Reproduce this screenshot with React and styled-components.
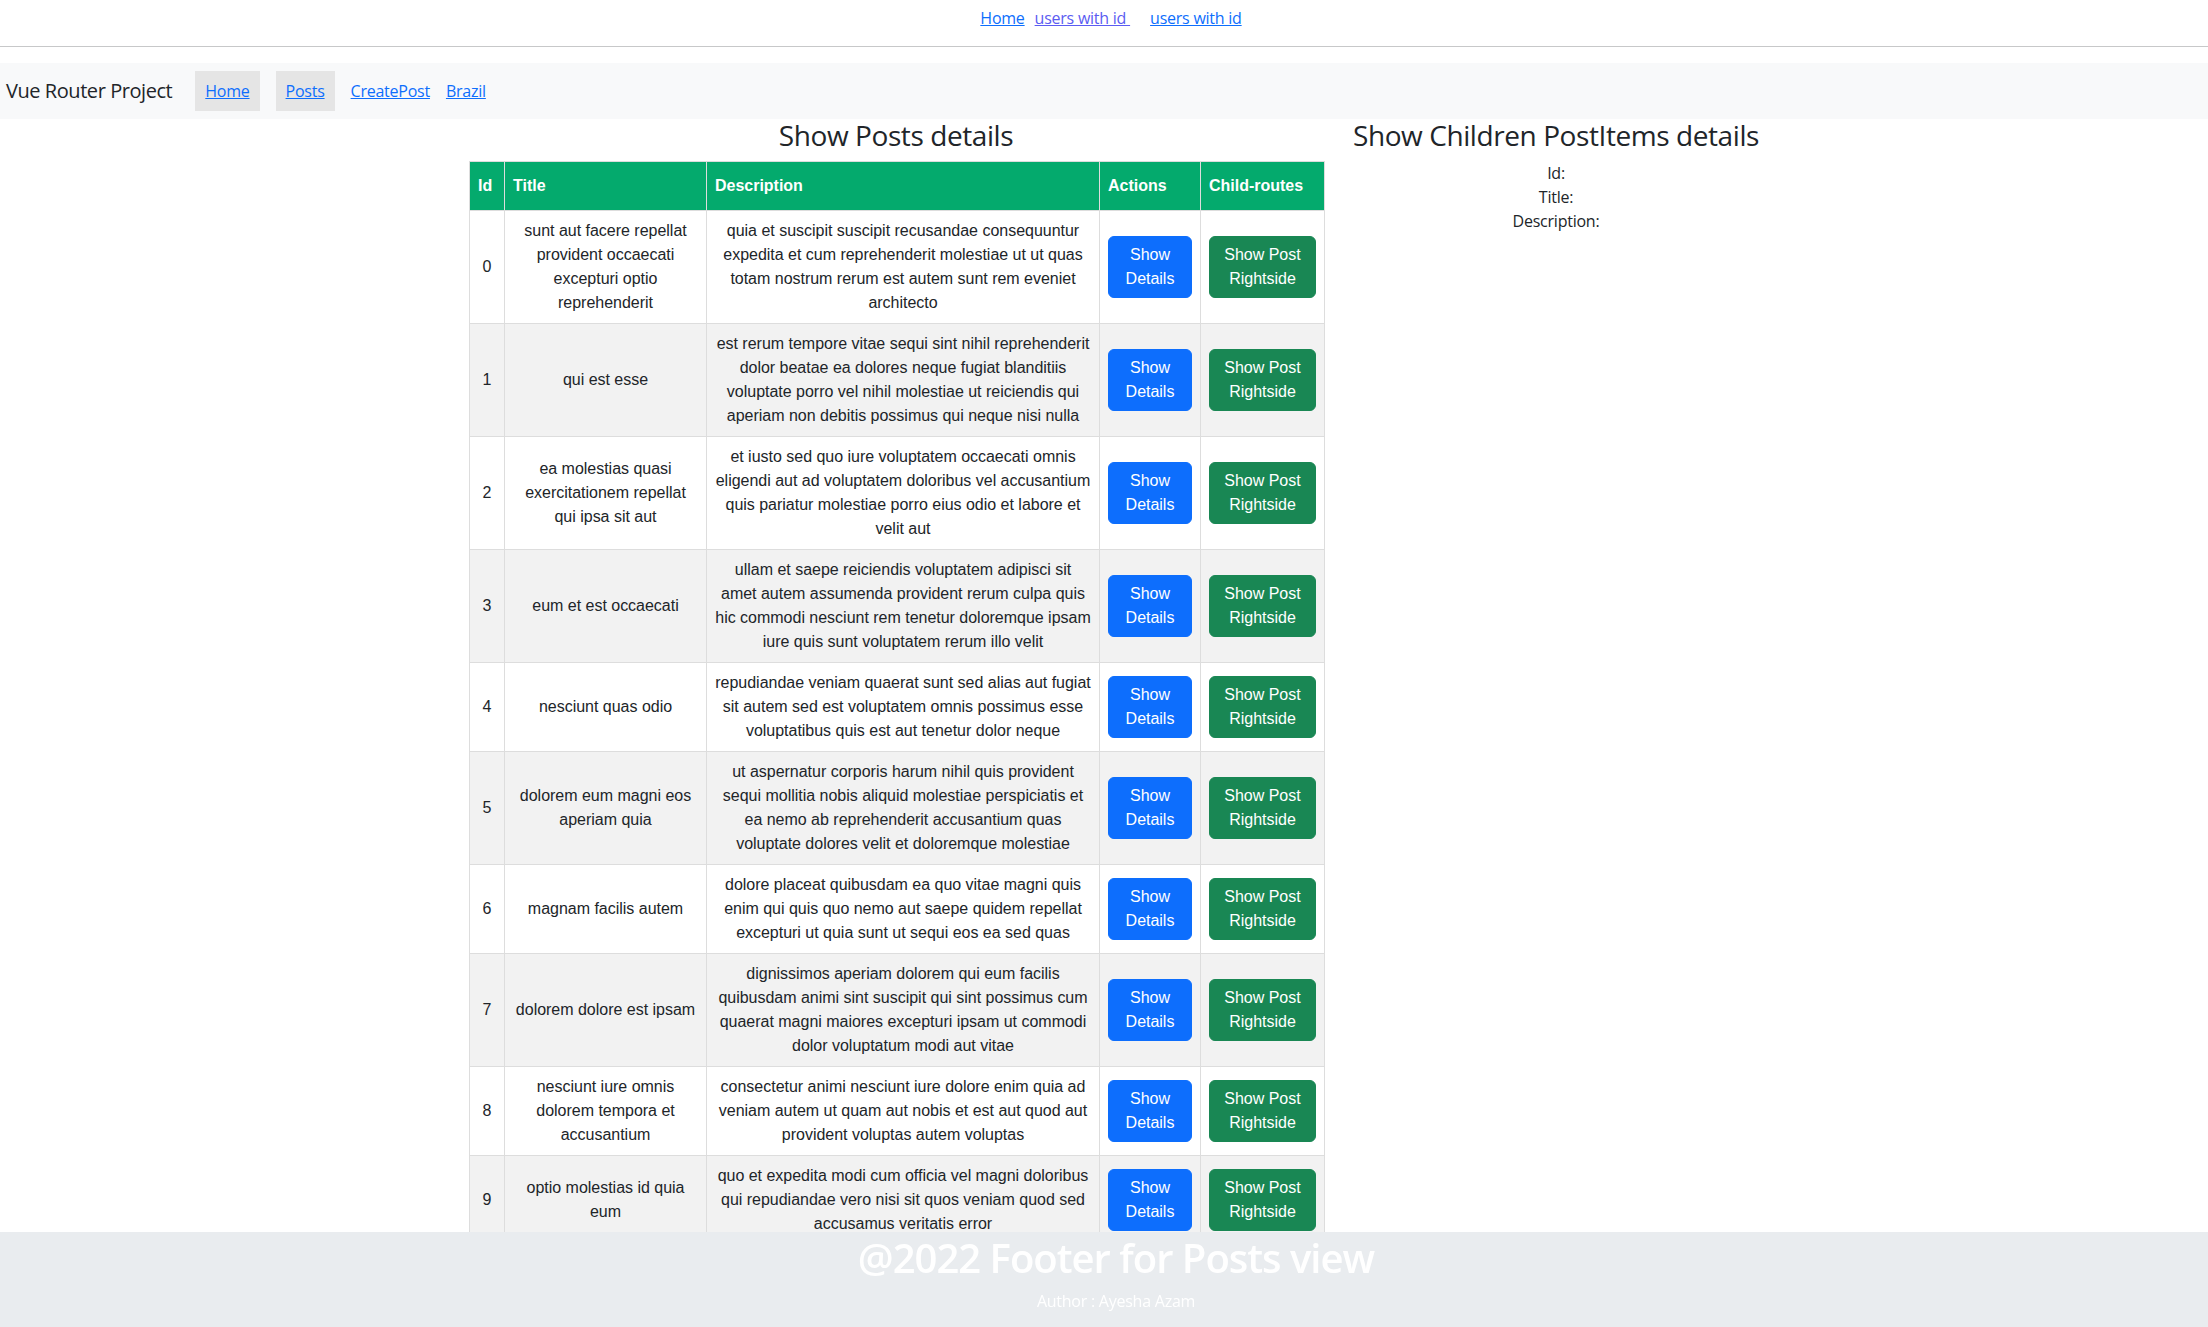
import React from "react";
import styled, { createGlobalStyle } from "styled-components";

const posts = [
  {
    title: "sunt aut facere repellat provident occaecati excepturi optio reprehenderit",
    body: "quia et suscipit suscipit recusandae consequuntur expedita et cum reprehenderit molestiae ut ut quas totam nostrum rerum est autem sunt rem eveniet architecto",
  },
  {
    title: "qui est esse",
    body: "est rerum tempore vitae sequi sint nihil reprehenderit dolor beatae ea dolores neque fugiat blanditiis voluptate porro vel nihil molestiae ut reiciendis qui aperiam non debitis possimus qui neque nisi nulla",
  },
  {
    title: "ea molestias quasi exercitationem repellat qui ipsa sit aut",
    body: "et iusto sed quo iure voluptatem occaecati omnis eligendi aut ad voluptatem doloribus vel accusantium quis pariatur molestiae porro eius odio et labore et velit aut",
  },
  {
    title: "eum et est occaecati",
    body: "ullam et saepe reiciendis voluptatem adipisci sit amet autem assumenda provident rerum culpa quis hic commodi nesciunt rem tenetur doloremque ipsam iure quis sunt voluptatem rerum illo velit",
  },
  {
    title: "nesciunt quas odio",
    body: "repudiandae veniam quaerat sunt sed alias aut fugiat sit autem sed est voluptatem omnis possimus esse voluptatibus quis est aut tenetur dolor neque",
  },
  {
    title: "dolorem eum magni eos aperiam quia",
    body: "ut aspernatur corporis harum nihil quis provident sequi mollitia nobis aliquid molestiae perspiciatis et ea nemo ab reprehenderit accusantium quas voluptate dolores velit et doloremque molestiae",
  },
  {
    title: "magnam facilis autem",
    body: "dolore placeat quibusdam ea quo vitae magni quis enim qui quis quo nemo aut saepe quidem repellat excepturi ut quia sunt ut sequi eos ea sed quas",
  },
  {
    title: "dolorem dolore est ipsam",
    body: "dignissimos aperiam dolorem qui eum facilis quibusdam animi sint suscipit qui sint possimus cum quaerat magni maiores excepturi ipsam ut commodi dolor voluptatum modi aut vitae",
  },
  {
    title: "nesciunt iure omnis dolorem tempora et accusantium",
    body: "consectetur animi nesciunt iure dolore enim quia ad veniam autem ut quam aut nobis et est aut quod aut provident voluptas autem voluptas",
  },
  {
    title: "optio molestias id quia eum",
    body: "quo et expedita modi cum officia vel magni doloribus qui repudiandae vero nisi sit quos veniam quod sed accusamus veritatis error",
  },
];

const GlobalStyle = createGlobalStyle`
  body {
    margin: 0;
    font-family: "Open Sans", "Noto Sans", sans-serif;
    font-size: 16px;
    line-height: 1.5;
    letter-spacing: -0.015em;
    color: #212529;
    background: #fff;
  }
  a {
    color: #0d6efd;
  }
`;

function App() {
  return (
    <>
      <GlobalStyle />
      <TopLinks>
        <a href="#">Home</a>
        <a href="#" className="visited">users with id&nbsp;</a>
        <a href="#">users with id</a>
      </TopLinks>
      <Rule />
      <Navbar>
        <Brand>Vue Router Project</Brand>
        <NavLink $active href="#">Home</NavLink>
        <NavLink $active href="#">Posts</NavLink>
        <NavLink href="#">CreatePost</NavLink>
        <NavLink href="#">Brazil</NavLink>
      </Navbar>
      <Main>
        <PostsColumn>
          <Heading>Show Posts details</Heading>
          <PostsTable>
            <colgroup>
              <col style={{ width: 35 }} />
              <col style={{ width: 202 }} />
              <col style={{ width: 393 }} />
              <col style={{ width: 101 }} />
              <col style={{ width: 124 }} />
            </colgroup>
            <thead>
              <tr>
                <th>Id</th>
                <th>Title</th>
                <th>Description</th>
                <th>Actions</th>
                <th>Child-routes</th>
              </tr>
            </thead>
            <tbody>
              {posts.map((post, i) => (
                <tr key={i}>
                  <td>{i}</td>
                  <td>{post.title}</td>
                  <td>{post.body}</td>
                  <td>
                    <Button $variant="primary">Show Details</Button>
                  </td>
                  <td>
                    <Button $variant="success">Show Post Rightside</Button>
                  </td>
                </tr>
              ))}
            </tbody>
          </PostsTable>
        </PostsColumn>
        <DetailsColumn>
          <Heading>Show Children PostItems details</Heading>
          <DetailLine>Id:</DetailLine>
          <DetailLine>Title:</DetailLine>
          <DetailLine>Description:</DetailLine>
        </DetailsColumn>
      </Main>
      <Footer>
        <FooterTitle>@2022 Footer for Posts view</FooterTitle>
        <FooterAuthor>Author : Ayesha Azam</FooterAuthor>
      </Footer>
    </>
  );
}

export default App;

const TopLinks = styled.div`
  display: flex;
  justify-content: center;
  gap: 10px;
  padding: 6px 0 0 14px;
  a {
    white-space: pre;
  }
  a.visited {
    color: #5b5cf2;
    margin-right: 10px;
  }
`;

const Rule = styled.hr`
  margin: 16px 0;
  border: 0;
  border-top: 1px solid #212529;
  opacity: 0.25;
`;

const Navbar = styled.nav`
  display: flex;
  align-items: center;
  gap: 16px;
  background: #f8f9fa;
  padding: 8px 6px;
`;

const Brand = styled.span`
  font-size: 20px;
  letter-spacing: -0.022em;
  margin-right: 7px;
  color: #212529;
`;

const NavLink = styled.a`
  padding: ${(p) => (p.$active ? "8px 10px" : "8px 0")};
  background: ${(p) => (p.$active ? "#e5e5e5" : "transparent")};
`;

const Main = styled.div`
  display: flex;
  align-items: flex-start;
  padding-left: 469px;
  padding-bottom: 120px;
`;

const PostsColumn = styled.div`
  width: 854px;
  text-align: center;
`;

const DetailsColumn = styled.div`
  width: 466px;
  text-align: center;
`;

const Heading = styled.h3`
  margin: 0 0 8px;
  font-size: 28px;
  font-weight: 500;
  line-height: 1.2;
  letter-spacing: -0.015em;
`;

const DetailLine = styled.div`
  line-height: 24px;
`;

const PostsTable = styled.table`
  font-family: "Liberation Sans", Arial, Helvetica, sans-serif;
  letter-spacing: -0.015px;
  border-collapse: collapse;
  table-layout: fixed;
  width: 855px;

  th,
  td {
    border: 1px solid #ddd;
    padding: 8px;
  }
  th {
    padding-top: 12px;
    padding-bottom: 12px;
    text-align: left;
    background-color: #04aa6d;
    color: #fff;
    font-weight: bold;
  }
  td {
    text-align: center;
    vertical-align: middle;
  }
  tbody tr:nth-child(even) {
    background-color: #f2f2f2;
  }
`;

const Button = styled.button`
  display: inline-block;
  font-family: inherit;
  font-size: 16px;
  line-height: 1.5;
  letter-spacing: inherit;
  padding: 6px 12px;
  border: 1px solid transparent;
  border-radius: 6px;
  color: #fff;
  background: ${(p) => (p.$variant === "success" ? "#198754" : "#0d6efd")};
  border-color: ${(p) => (p.$variant === "success" ? "#198754" : "#0d6efd")};
  cursor: pointer;
`;

const Footer = styled.footer`
  position: fixed;
  left: 0;
  right: 0;
  bottom: 0;
  height: 95px;
  box-sizing: border-box;
  padding: 2px 0 0 24px;
  background: #e9ecef;
  color: #fff;
  text-align: center;
`;

const FooterTitle = styled.h1`
  margin: 0 0 7px;
  font-size: 40px;
  font-weight: 600;
  line-height: 1.2;
  letter-spacing: -0.025em;
`;

const FooterAuthor = styled.p`
  margin: 0;
  font-size: 16px;
  font-weight: 500;
  line-height: 24px;
`;
